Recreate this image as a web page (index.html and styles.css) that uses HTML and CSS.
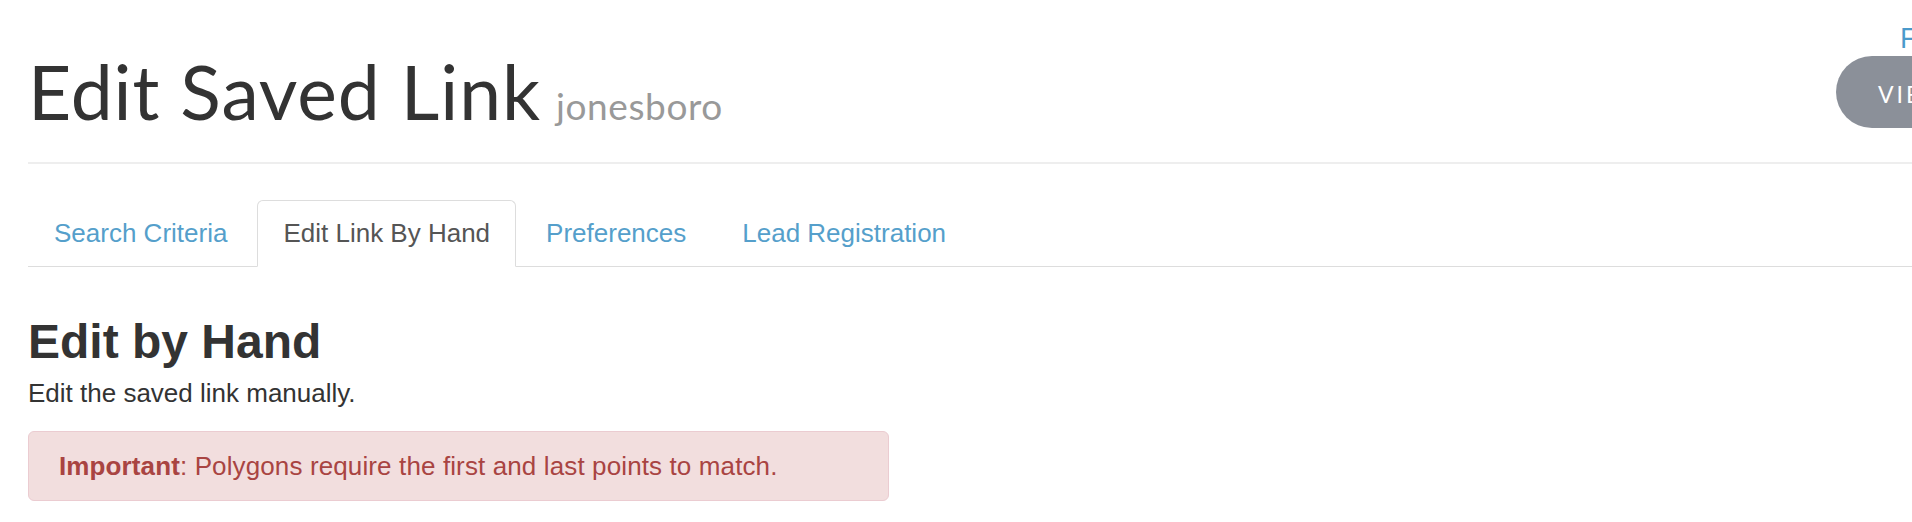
FILE: index.html
```html
<!DOCTYPE html>
<html lang="en">
<head>
<meta charset="utf-8">
<title>Edit Saved Link</title>
<link rel="stylesheet" href="styles.css">
</head>
<body>
<div class="container">
  <header class="page-header">
    <h1 class="title">Edit Saved Link <small class="subtitle">jonesboro</small></h1>
    <div class="header-actions">
      <a class="top-link" href="#">Feedback</a>
      <a class="btn-pill" href="#">VIEW LINK</a>
    </div>
  </header>

  <ul class="nav-tabs">
    <li class="tab"><a href="#">Search Criteria</a></li>
    <li class="tab active"><a href="#">Edit Link By Hand</a></li>
    <li class="tab"><a href="#">Preferences</a></li>
    <li class="tab"><a href="#">Lead Registration</a></li>
  </ul>

  <section class="panel">
    <h2 class="panel-title">Edit by Hand</h2>
    <p class="panel-text">Edit the saved link manually.</p>
    <div class="alert"><strong>Important</strong>: Polygons require the first and last points to match.</div>
  </section>
</div>
</body>
</html>
```

FILE: styles.css
```css
html, body {
  margin: 0;
  padding: 0;
  background: #ffffff;
  overflow: hidden;
}

body {
  font-family: "Liberation Sans", Arial, Helvetica, sans-serif;
  font-size: 26px;
  line-height: 37px;
  color: #333333;
}

.container {
  width: 2036px;
  padding-left: 28px;
  box-sizing: border-box;
}

.page-header {
  display: flex;
  align-items: flex-start;
  border-bottom: 2px solid #eeeeee;
  padding-bottom: 30px;
}

.title {
  flex: 1;
  margin: 50px 0 0 0;
  font-family: Lato, "Open Sans", sans-serif;
  font-weight: 400;
  font-size: 75px;
  line-height: 82px;
  letter-spacing: 0.9px;
  color: #333333;
  white-space: nowrap;
}

.subtitle {
  margin-left: -5px;
  font-size: 37px;
  line-height: 1;
  letter-spacing: 0.6px;
  color: #999999;
  font-weight: 400;
}

.header-actions {
  width: 200px;
  display: flex;
  flex-direction: column;
  align-items: flex-start;
  padding-top: 23px;
}

.top-link {
  margin-left: 64px;
  font-family: Lato, sans-serif;
  font-size: 26px;
  line-height: 30px;
  color: #4a9acb;
  text-decoration: none;
  white-space: nowrap;
}

.btn-pill {
  margin-top: 3px;
  box-sizing: border-box;
  height: 72px;
  padding: 4px 40px 0 42px;
  border-radius: 36px;
  background: #8b9099;
  color: #ffffff;
  font-family: Lato, sans-serif;
  font-size: 23px;
  line-height: 68px;
  letter-spacing: 3px;
  text-decoration: none;
  white-space: nowrap;
}

.nav-tabs {
  display: flex;
  list-style: none;
  margin: 36px 0 0 0;
  padding: 0;
  border-bottom: 1px solid #dddddd;
}

.tab {
  margin: 0 4px -1px 0;
}

.tab a {
  display: block;
  padding: 14px 25px;
  border: 1px solid transparent;
  border-radius: 6px 6px 0 0;
  color: #559fcb;
  text-decoration: none;
  white-space: nowrap;
}

.tab.active a {
  color: #555555;
  background: #ffffff;
  border-color: #dddddd;
  border-bottom-color: transparent;
}

.panel {
  width: 861px;
}

.panel-title {
  margin: 48px 0 0 0;
  font-size: 48px;
  line-height: 53px;
  font-weight: 700;
  color: #333333;
}

.panel-text {
  margin: 7px 0 0 0;
}

.alert {
  margin-top: 19px;
  padding: 16px 30px 15px;
  background: #f2dede;
  border: 1px solid #ebccd1;
  border-radius: 6px;
  color: #a94442;
  letter-spacing: 0.12px;
}
```
